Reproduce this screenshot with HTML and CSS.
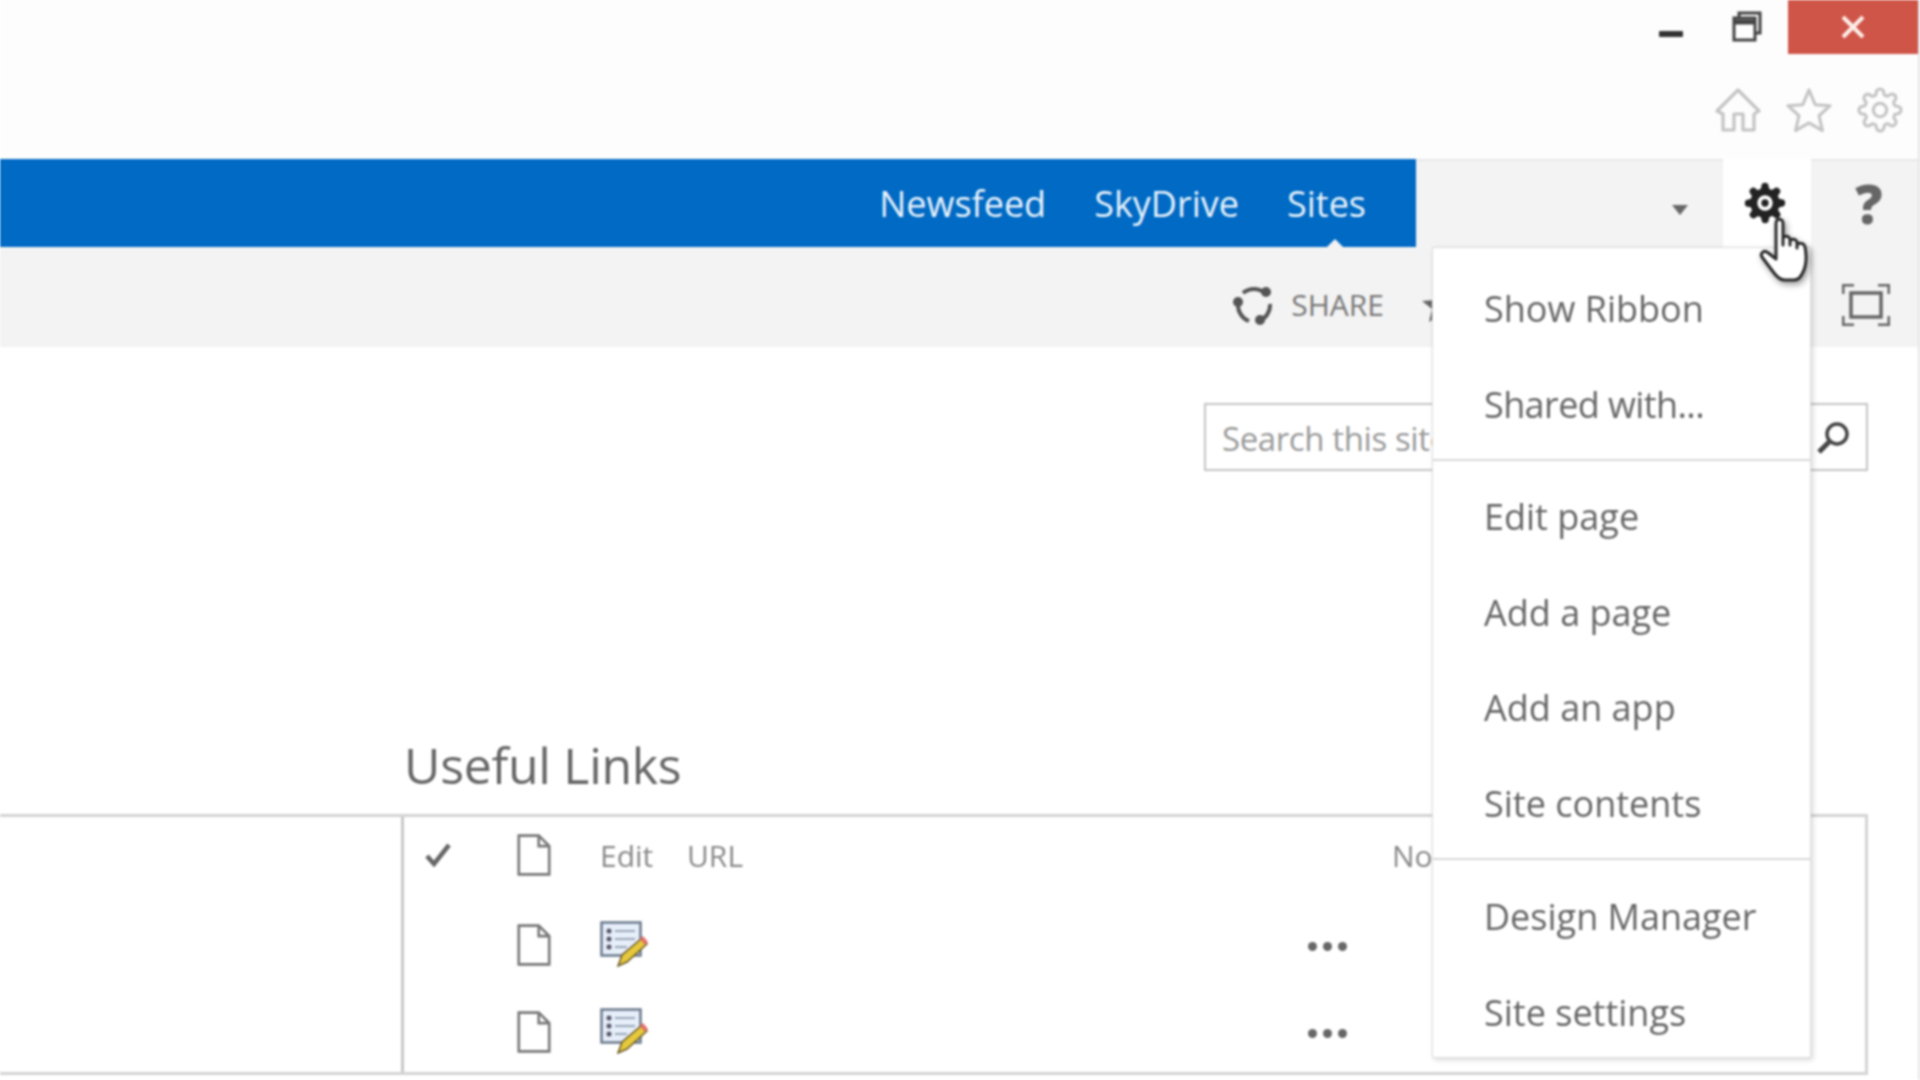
FILE: index.html
```html
<!DOCTYPE html>
<html lang="en">
<head>
<meta charset="utf-8">
<title>Useful Links</title>
<link rel="stylesheet" href="styles.css">
</head>
<body>
<div class="app">
  <header class="chrome">
    <div class="win-row">
      <svg class="win-min" viewBox="0 0 24 6"><rect width="24" height="6" rx="1" fill="#333"/></svg>
      <svg class="win-restore" viewBox="0 0 30 31" fill="none" stroke="#444" stroke-width="3"><path d="M7 6V2h21v20h-5"/><rect x="2" y="7" width="21" height="22" fill="#fff"/><path d="M2 11h21" stroke-width="5"/></svg>
      <div class="win-close"><svg viewBox="0 0 24 24" width="24" height="24" stroke="#fdeee8" stroke-width="4" fill="none"><path d="M2 2l20 20M22 2L2 22"/></svg></div>
    </div>
    <div class="tool-row">
      <svg class="tool" viewBox="0 0 46 46" fill="none" stroke="#c4c4c4" stroke-width="3.2" stroke-linejoin="round"><path d="M2 24L23 3l21 21-5 3v16H28V27h-9v16H8V27z"/></svg>
      <svg class="tool" viewBox="0 0 48 46" fill="none" stroke="#c4c4c4" stroke-width="3.2" stroke-linejoin="round"><path d="M24 2l6.500 15.500L46 18.500 34.500 29l3.500 15.500L24 36.500 10 44.500 13.500 29 2 18.500l15.500-1z"/></svg>
      <svg class="tool" viewBox="0 0 24 24" fill="none" stroke="#c4c4c4" stroke-width="1.600"><circle cx="12" cy="12" r="3.500"/><path d="M19.400 15a1.650 1.650 0 0 0 .33 1.820l.06.06a2 2 0 0 1 0 2.830 2 2 0 0 1-2.830 0l-.06-.06a1.650 1.650 0 0 0-1.820-.33 1.650 1.650 0 0 0-1 1.510V21a2 2 0 0 1-2 2 2 2 0 0 1-2-2v-.09A1.650 1.650 0 0 0 9 19.400a1.650 1.650 0 0 0-1.820.33l-.06.06a2 2 0 0 1-2.830 0 2 2 0 0 1 0-2.830l.06-.06a1.650 1.650 0 0 0 .33-1.820 1.650 1.650 0 0 0-1.510-1H3a2 2 0 0 1-2-2 2 2 0 0 1 2-2h.09A1.650 1.650 0 0 0 4.600 9a1.650 1.650 0 0 0-.33-1.820l-.06-.06a2 2 0 0 1 0-2.830 2 2 0 0 1 2.830 0l.06.06a1.650 1.650 0 0 0 1.820.33H9a1.650 1.650 0 0 0 1-1.510V3a2 2 0 0 1 2-2 2 2 0 0 1 2 2v.09a1.650 1.650 0 0 0 1 1.510 1.650 1.650 0 0 0 1.820-.33l.06-.06a2 2 0 0 1 2.830 0 2 2 0 0 1 0 2.830l-.06.06a1.650 1.650 0 0 0-.33 1.820V9a1.650 1.650 0 0 0 1.510 1H21a2 2 0 0 1 2 2 2 2 0 0 1-2 2h-.09a1.650 1.650 0 0 0-1.510 1z"/></svg>
    </div>
  </header>

  <nav class="suite">
    <div class="suite-links">
      <a class="suite-link">Newsfeed</a>
      <a class="suite-link">SkyDrive</a>
      <a class="suite-link is-active">Sites</a>
    </div>
    <div class="suite-side">
      <span class="caret"></span>
      <div class="gear-cell">
        <svg class="gear" viewBox="0 0 24 24"><path fill="#222" d="M19.400 15a1.650 1.650 0 0 0 .33 1.820l.06.06a2 2 0 0 1 0 2.830 2 2 0 0 1-2.830 0l-.06-.06a1.650 1.650 0 0 0-1.820-.33 1.650 1.650 0 0 0-1 1.510V21a2 2 0 0 1-2 2 2 2 0 0 1-2-2v-.09A1.650 1.650 0 0 0 9 19.400a1.650 1.650 0 0 0-1.820.33l-.06.06a2 2 0 0 1-2.830 0 2 2 0 0 1 0-2.830l.06-.06a1.650 1.650 0 0 0 .33-1.820 1.650 1.650 0 0 0-1.510-1H3a2 2 0 0 1-2-2 2 2 0 0 1 2-2h.09A1.650 1.650 0 0 0 4.600 9a1.650 1.650 0 0 0-.33-1.820l-.06-.06a2 2 0 0 1 0-2.830 2 2 0 0 1 2.830 0l.06.06a1.650 1.650 0 0 0 1.820.33H9a1.650 1.650 0 0 0 1-1.510V3a2 2 0 0 1 2-2 2 2 0 0 1 2 2v.09a1.650 1.650 0 0 0 1 1.510 1.650 1.650 0 0 0 1.820-.33l.06-.06a2 2 0 0 1 2.830 0 2 2 0 0 1 0 2.830l-.06.06a1.650 1.650 0 0 0-.33 1.820V9a1.650 1.650 0 0 0 1.510 1H21a2 2 0 0 1 2 2 2 2 0 0 1-2 2h-.09a1.650 1.650 0 0 0-1.510 1z"/><circle cx="12" cy="12" r="4.200" fill="#fff"/><circle cx="12" cy="12" r="2" fill="#222"/></svg>
        <div class="menu">
          <section class="menu-group">
            <a class="menu-item">Show Ribbon</a>
            <a class="menu-item menu-item-tight">Shared with...</a>
          </section>
          <section class="menu-group">
            <a class="menu-item">Edit page</a>
            <a class="menu-item">Add a page</a>
            <a class="menu-item">Add an app</a>
            <a class="menu-item">Site contents</a>
          </section>
          <section class="menu-group">
            <a class="menu-item">Design Manager</a>
            <a class="menu-item">Site settings</a>
          </section>
        </div>
        <svg class="hand" viewBox="0 0 54 68"><path fill="#fff" stroke="#2a2a2a" stroke-width="3" stroke-linejoin="round" d="M18 4c3-2 6 0 6 3v22l0-7c2-3 6-2 7 1v6-4c2-3 6-2 7 1v6-3c2-3 7-2 8 2 2 10 1 20-3 27-2 4-5 6-8 6H26c-5 0-8-3-11-7L3 41c-2-3 1-7 5-5l9 7V8c0-2 0-3 1-4z"/></svg>
      </div>
      <div class="help-cell">?</div>
    </div>
  </nav>

  <div class="ribbon">
    <svg class="share-icon" viewBox="0 0 42 42" fill="none" stroke="#555" stroke-width="4"><path d="M10 9a17 17 0 0 1 22 0M37 20a17 17 0 0 1-11 17M16 37A17 17 0 0 1 5 20"/><circle cx="33" cy="8" r="5" fill="#555" stroke="none"/><circle cx="27" cy="36" r="5" fill="#555" stroke="none"/><circle cx="5" cy="18" r="5" fill="#555" stroke="none"/></svg>
    <span class="share-text">SHARE</span>
    <svg class="follow-icon" viewBox="0 0 36 36"><path fill="#666" d="M18 1l5 12 13 1-10 8 3 13-11-7-11 7 3-13L0 14l13-1z"/></svg>
    <svg class="focus-icon" viewBox="0 0 48 42" fill="none" stroke="#666" stroke-width="3"><path d="M1 10V1h11M36 1h11v9M47 32v9H36M12 41H1v-9"/><rect x="9" y="9" width="30" height="24" stroke-width="3.500"/></svg>
  </div>

  <main class="content">
    <form class="search">
      <span class="search-text">Search this site</span>
      <svg class="search-icon" viewBox="0 0 34 34" fill="none" stroke="#444" stroke-width="3.500"><circle cx="21" cy="13" r="10"/><path d="M13 21L3 31" stroke-width="5"/></svg>
    </form>
    <h1 class="title">Useful Links</h1>
    <div class="list-band">
      <div class="list">
        <div class="row row-head">
          <svg class="check" viewBox="0 0 26 24" fill="none" stroke="#666" stroke-width="4.500"><path d="M2 13l7 8L24 2"/></svg>
          <svg class="doc" viewBox="0 0 32 40" fill="none" stroke="#777" stroke-width="2.500"><path d="M1.500 1.500h19l10 10v27h-29zM20.500 1.500v10h10"/></svg>
          <span class="col-label">Edit</span>
          <span class="col-label">URL</span>
          <span></span>
          <span class="col-label">Notes</span>
        </div>
        <div class="row">
          <span></span>
          <svg class="doc" viewBox="0 0 32 40" fill="none" stroke="#777" stroke-width="2.500"><path d="M1.500 1.500h19l10 10v27h-29zM20.500 1.500v10h10"/></svg>
          <svg class="edit-icon" viewBox="0 0 48 46"><rect x="1.500" y="1.500" width="39" height="33" fill="#e6eefa" stroke="#6b7a8c" stroke-width="2.500"/><g fill="#556"><circle cx="9" cy="10" r="2.500"/><circle cx="9" cy="18" r="2.500"/><circle cx="9" cy="26" r="2.500"/></g><path d="M15 10h20M15 18h20M15 26h12" stroke="#9aa7b8" stroke-width="2"/><path d="M18 45l4-11 20-17 5 6-20 18z" fill="#e6c83c" stroke="#6b5a2a" stroke-width="1.500"/><path d="M40 18l3-3 5 6-3 3z" fill="#e2706a"/></svg>
          <span></span>
          <span class="dots"><i></i><i></i><i></i></span>
        </div>
        <div class="row">
          <span></span>
          <svg class="doc" viewBox="0 0 32 40" fill="none" stroke="#777" stroke-width="2.500"><path d="M1.500 1.500h19l10 10v27h-29zM20.500 1.500v10h10"/></svg>
          <svg class="edit-icon" viewBox="0 0 48 46"><rect x="1.500" y="1.500" width="39" height="33" fill="#e6eefa" stroke="#6b7a8c" stroke-width="2.500"/><g fill="#556"><circle cx="9" cy="10" r="2.500"/><circle cx="9" cy="18" r="2.500"/><circle cx="9" cy="26" r="2.500"/></g><path d="M15 10h20M15 18h20M15 26h12" stroke="#9aa7b8" stroke-width="2"/><path d="M18 45l4-11 20-17 5 6-20 18z" fill="#e6c83c" stroke="#6b5a2a" stroke-width="1.500"/><path d="M40 18l3-3 5 6-3 3z" fill="#e2706a"/></svg>
          <span></span>
          <span class="dots"><i></i><i></i><i></i></span>
        </div>
      </div>
    </div>
  </main>
</div>
</body>
</html>
```
FILE: styles.css
```css
* { box-sizing: border-box; }
html, body { margin: 0; height: 100%; background: #fff; overflow: hidden; }
.app {
  width: 1920px; height: 1080px; display: flex; flex-direction: column;
  font-family: "Open Sans", "Noto Sans", sans-serif; color: #666;
  border-right: 2px solid #e4e4e4; overflow: hidden; filter: blur(.9px);
}
.chrome { height: 159px; background: #fdfdfd; flex: none; }
.win-row { height: 54px; display: flex; align-items: center; justify-content: flex-end; }
.win-min { width: 24px; height: 6px; margin-right: 49px; margin-top: 14px; }
.win-restore { width: 30px; height: 31px; margin-right: 26px; margin-bottom: 2px; }
.win-close { width: 130px; height: 54px; background: #cf5549; display: flex; align-items: center; justify-content: center; }
.tool-row { height: 105px; display: flex; align-items: flex-start; justify-content: flex-end; gap: 25px; padding: 33px 15px 0 0; }
.tool { width: 46px; height: 46px; }

.suite { height: 88px; display: flex; flex: none; }
.suite-links { width: 1416px; background: #006ac4; display: flex; justify-content: flex-end; align-items: center; gap: 48px; padding: 1px 50px 0 0; }
.suite-link { position: relative; color: #e8f2fb; font-size: 36px; line-height: 49px; }
.is-active::after {
  content: ""; position: absolute; left: calc(50% + 9px); bottom: -20px; margin-left: -9px;
  border: 9px solid transparent; border-top: 0; border-bottom-color: #f3f3f3;
}
.suite-side { flex: 1; background: #f3f3f3; display: flex; align-items: stretch; position: relative; z-index: 2; box-shadow: inset 0 2px 0 #e8e8e8; }
.caret { margin: 46px 0 0 256px; width: 0; height: 0; border: 8px solid transparent; border-top: 10px solid #666; border-bottom: 0; }
.gear-cell { position: relative; width: 88px; margin-left: 35px; background: #fff; display: flex; align-items: flex-start; justify-content: center; padding-top: 22px; }
.gear { width: 44px; height: 44px; margin-left: -4px; }
.hand { position: absolute; left: 36px; top: 57px; width: 54px; height: 68px; z-index: 4; filter: drop-shadow(2px 3px 3px rgba(0,0,0,.4)); }
.help-cell { flex: 1; text-align: center; font-size: 54px; font-weight: 800; color: #666; line-height: 88px; padding-left: 9px; }

.menu {
  position: absolute; right: 0; top: 88px; width: 379px; height: 811px; z-index: 3;
  background: #fff; border: 1px solid #dcdcdc; box-shadow: 2px 2px 5px rgba(0,0,0,.15);
}
.menu-group { padding: 13px 0 7px; border-bottom: 2px solid #d8d8d8; }
.menu-group + .menu-group { padding-top: 8px; }
.menu-group:last-child { border-bottom: 0; padding-top: 9px; }
.menu-item { display: flex; align-items: center; height: 95.500px; padding-left: 51px; font-size: 36px; color: #666; }
.menu-item-tight { letter-spacing: -.6px; }

.ribbon { height: 100px; flex: none; background: #f3f3f3; display: flex; align-items: center; justify-content: flex-end; padding: 15px 28px 0 0; }
.share-icon { width: 42px; height: 42px; margin-right: 16px; }
.share-text { font-size: 30px; color: #777; margin-right: 38px; }
.follow-icon { width: 36px; height: 36px; margin-right: 384px; }
.focus-icon { width: 48px; height: 42px; }

.content { flex: 1; display: flex; flex-direction: column; background: #fff; }
.search { align-self: flex-end; margin: 56px 50px 0 0; width: 664px; height: 68px; flex: none; border: 2px solid #c4c4c4; display: flex; align-items: center; justify-content: space-between; padding: 2px 16px 0; }
.search-text { font-size: 33px; letter-spacing: -.4px; color: #999; }
.search-icon { width: 34px; height: 34px; }
.title { margin: 260px 0 0 404px; flex: none; font-size: 50px; line-height: 68px; font-weight: 400; letter-spacing: -.3px; color: #666; height: 83px; }
.list-band { flex: none; height: 261px; border-top: 3px solid #d4d4d4; border-bottom: 3px solid #d4d4d4; padding-left: 401px; margin-right: 50px; margin-bottom: 5px; }
.list { height: 100%; background: #fff; border-left: 3px solid #c8c8c8; border-right: 3px solid #d4d4d4; }
.row { height: 87px; display: grid; grid-template-columns: 113px 83px 87px 619px 86px 1fr; align-items: center; }
.row-head { height: 84px; padding-bottom: 8px; }
.check { width: 26px; height: 24px; margin-left: 21px; }
.doc { width: 34px; height: 42px; }
.edit-icon { width: 48px; height: 46px; margin-bottom: 2px; }
.col-label { font-size: 30px; color: #888; }
.dots { display: flex; gap: 6px; margin: 4px 0 0 2px; }
.dots i { width: 9px; height: 9px; border-radius: 50%; background: #666; }
```
